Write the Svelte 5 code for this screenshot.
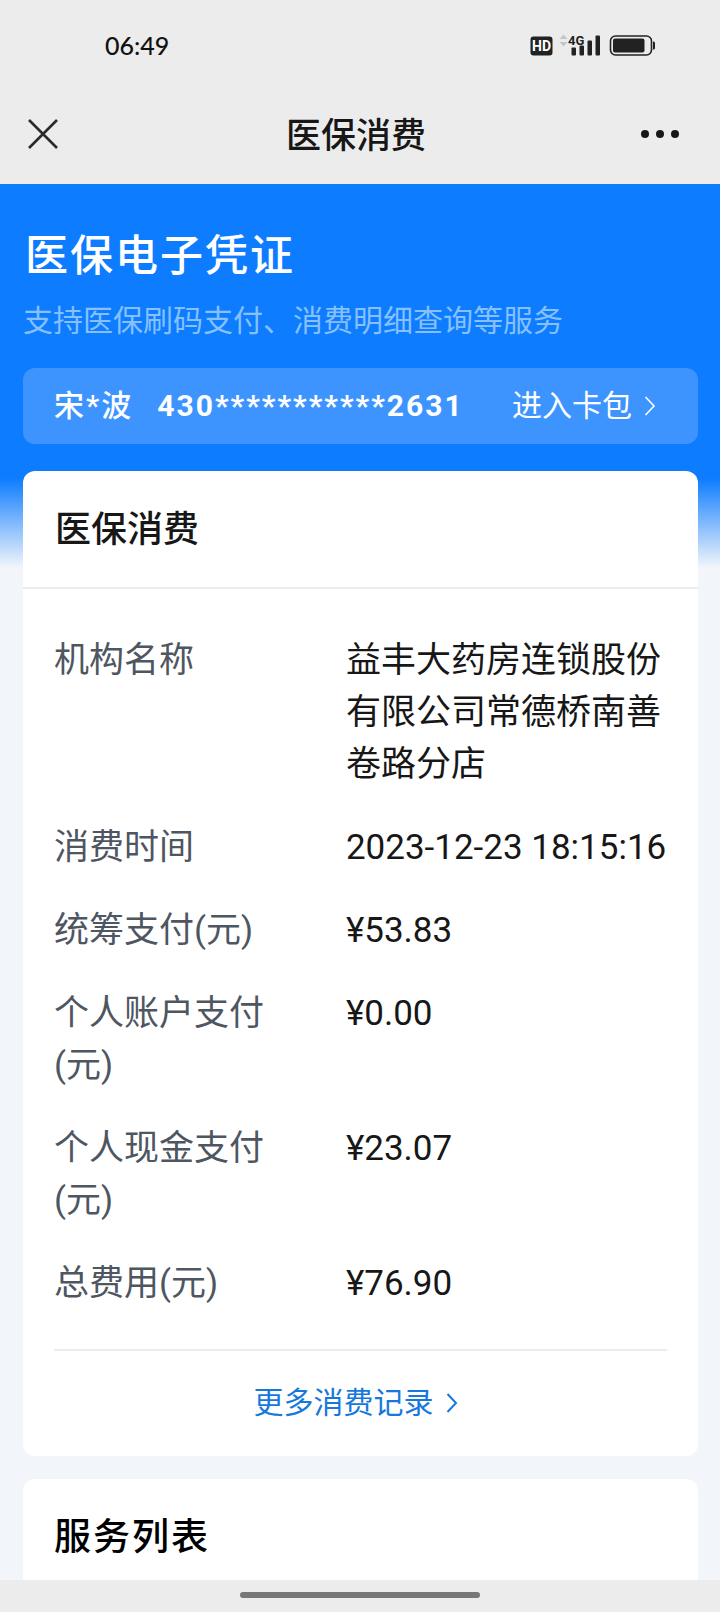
<script>
  const rows = [
    { label: '机构名称', value: '益丰大药房连锁股份有限公司常德桥南善卷路分店' },
    { label: '消费时间', value: '2023-12-23 18:15:16' },
    { label: '统筹支付(元)', value: '¥53.83' },
    { label: '个人账户支付(元)', value: '¥0.00' },
    { label: '个人现金支付(元)', value: '¥23.07' },
    { label: '总费用(元)', value: '¥76.90' }
  ];
</script>

<div class="page">
  <div class="status">
    <span class="time">06:49</span>
    <svg class="indicators" width="126" height="24" viewBox="0 0 126 24" aria-hidden="true">
      <rect x="0.5" y="3.5" width="22" height="19" rx="3" fill="#222" />
      <text x="11.5" y="18" text-anchor="middle" class="hd">HD</text>
      <path d="M29.5 6 33.5 1.5l4 4.5zM29.5 9l4 4.5 4-4.5z" fill="#c6c6c6" />
      <g fill="#222">
        <rect x="41.5" y="14.5" width="4.5" height="8" rx="1" />
        <rect x="49.5" y="12.5" width="4.5" height="10" rx="1" />
        <rect x="57.5" y="7.5" width="4.5" height="15" rx="1" />
        <rect x="65.5" y="2.5" width="4.5" height="20" rx="1" />
        <rect x="83" y="5.5" width="31.5" height="14" rx="2" />
        <path d="M123 8.5h.5a1.5 1.5 0 0 1 1.5 1.5v5a1.5 1.5 0 0 1-1.5 1.5h-.5z" />
      </g>
      <text x="38" y="12" class="net">4G</text>
      <rect x="80.5" y="3" width="41" height="19" rx="5" fill="none" stroke="#222" stroke-width="1.6" />
    </svg>
  </div>

  <header class="nav">
    <button class="icon-button" aria-label="关闭">
      <svg width="30" height="30" viewBox="0 0 30 30" aria-hidden="true">
        <path d="M1 1 29 29M29 1 1 29" stroke="#2a2a2a" stroke-width="2.6" fill="none" />
      </svg>
    </button>
    <h1>医保消费</h1>
    <button class="icon-button end" aria-label="更多">
      <svg width="40" height="10" viewBox="0 0 40 10" aria-hidden="true" fill="#171717">
        <circle cx="5" cy="5" r="4" /><circle cx="20" cy="5" r="4" /><circle cx="35" cy="5" r="4" />
      </svg>
    </button>
  </header>

  <main>
    <h2 class="hero-title">医保电子凭证</h2>
    <p class="hero-text">支持医保刷码支付、消费明细查询等服务</p>

    <div class="holder">
      <strong class="name">宋*波</strong>
      <strong>430***********2631</strong>
      <a class="wallet" href="#wallet">
        进入卡包
        <svg width="12" height="20" viewBox="0 0 12 20" aria-hidden="true">
          <path d="M1.5 1 10 10 1.5 19" fill="none" stroke="currentColor" stroke-width="1.6" />
        </svg>
      </a>
    </div>

    <section class="card">
      <h2 class="card-title">医保消费</h2>
      <dl>
        {#each rows as row}
          <div class="row">
            <dt>{row.label}</dt>
            <dd>{row.value}</dd>
          </div>
        {/each}
      </dl>
      <a class="more" href="#records">
        更多消费记录
        <svg width="12" height="20" viewBox="0 0 12 20" aria-hidden="true">
          <path d="M1.5 1 10 10 1.5 19" fill="none" stroke="currentColor" stroke-width="2" />
        </svg>
      </a>
    </section>

    <section class="card services">
      <h2>服务列表</h2>
    </section>
  </main>

  <div class="home-bar"><span></span></div>
</div>

<style>
  :global(body) {
    background: #f2f6fa;
  }

  .page {
    display: flex;
    flex-direction: column;
    min-height: 100vh;
    font-family: Roboto, 'Noto Sans CJK SC', sans-serif;
    color: #171717;
  }

  h1,
  h2,
  p,
  dl,
  dd {
    margin: 0;
  }

  a {
    text-decoration: none;
  }

  .status {
    display: flex;
    align-items: center;
    justify-content: space-between;
    height: 90px;
    padding: 0 64px 0 105px;
    background: #ececec;
  }

  .time {
    font: 500 25px/32px Lato, sans-serif;
    color: #111;
  }

  .hd {
    font: 700 14px Roboto, sans-serif;
    fill: #fff;
  }

  .net {
    font: 700 13px Roboto, sans-serif;
    fill: #222;
  }

  .nav {
    display: grid;
    grid-template-columns: 1fr auto 1fr;
    align-items: center;
    height: 94px;
    padding: 0 40px 6px 24px;
    box-sizing: border-box;
    background: #ececec;
  }

  .nav h1 {
    padding: 6px 0 0 8px;
    font-size: 35px;
    line-height: 52px;
    font-weight: 500;
  }

  .icon-button {
    display: flex;
    justify-self: start;
    padding: 4px;
    border: 0;
    background: none;
  }

  .icon-button.end {
    justify-self: end;
    padding: 12px 0;
  }

  main {
    flex: 1;
    display: flex;
    flex-direction: column;
    padding: 42px 22px 0 23px;
    background: linear-gradient(#0d7cff 294px, #f2f6fa 384px);
  }

  .hero-title {
    padding-left: 2px;
    font-size: 43px;
    line-height: 60px;
    font-weight: 500;
    letter-spacing: 2px;
    color: #fff;
  }

  .hero-text {
    margin-top: 14px;
    font-size: 30px;
    line-height: 42px;
    color: #86c0ff;
  }

  .holder {
    display: flex;
    align-items: center;
    gap: 24px;
    margin-top: 26px;
    padding: 17px 42px 17px 31px;
    border-radius: 12px;
    background: #3d94ff;
    color: #fff;
    font-size: 30px;
    line-height: 42px;
  }

  .holder strong {
    font-weight: 700;
    letter-spacing: 2px;
  }

  .holder .name {
    font-weight: 500;
  }

  .wallet {
    display: flex;
    align-items: center;
    gap: 12px;
    margin-left: auto;
    color: #fff;
  }

  .card {
    margin-top: 27px;
    border-radius: 12px;
    background: #fff;
  }

  .card-title {
    padding: 33px 32px 31px;
    border-bottom: 2px solid #ececec;
    font-size: 36px;
    line-height: 52px;
    font-weight: 500;
  }

  dl {
    display: flex;
    flex-direction: column;
    gap: 31px;
    margin: 0 31px;
    padding: 46px 0 39px;
    border-bottom: 2px solid #ececec;
    font-size: 35px;
    line-height: 52px;
  }

  .row {
    display: grid;
    grid-template-columns: minmax(0, 10fr) minmax(0, 11fr);
  }

  dt {
    padding-right: 48px;
    color: #4e5661;
  }

  .more {
    display: flex;
    align-items: center;
    justify-content: center;
    gap: 12px;
    padding: 31px 41px 32px 31px;
    font-size: 30px;
    line-height: 42px;
    color: #1778dc;
  }

  .services {
    flex: 1;
    margin-top: 23px;
    padding: 33px 31px 16px;
    border-radius: 12px 12px 0 0;
  }

  .services h2 {
    font-size: 37px;
    line-height: 52px;
    font-weight: 500;
    letter-spacing: 2px;
    color: #000;
  }

  .home-bar {
    position: sticky;
    bottom: 0;
    display: flex;
    justify-content: center;
    padding: 12px 0 14px;
    background: #ececec;
  }

  .home-bar span {
    width: 240px;
    height: 6px;
    border-radius: 3px;
    background: #777;
  }
</style>
